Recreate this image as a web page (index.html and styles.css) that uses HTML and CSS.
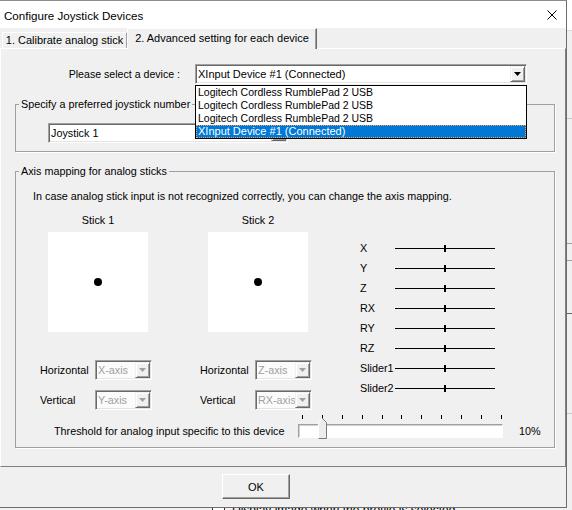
FILE: index.html
```html
<!DOCTYPE html>
<html lang="en">
<head>
    <meta charset="UTF-8">
    <meta name="viewport" content="width=device-width, initial-scale=1.0">
    <title>Configure Joystick Devices</title>
    <link rel="stylesheet" href="styles.css">
</head>
<body>
    <!-- Ventana de fondo (parcialmente visible) -->
    <div class="backwin">
        <div class="bw-title"></div>
        <div class="bw-row r1"></div>
        <div class="bw-row r2"></div>
        <div class="bw-row r3"></div>
        <div class="bw-row r4"></div>
        <div class="bw-row r5"></div>
        <div class="bw-row r6"></div>
        <div class="bw-foot"><span class="bw-check"></span>Display image when the profile is selected</div>
    </div>

    <div class="dialog">
        <div class="titlebar">
            <span class="title">Configure Joystick Devices</span>
            <svg class="close" width="10" height="10" viewBox="0 0 10 10">
                <path d="M0.5 0.5L9.5 9.5M9.5 0.5L0.5 9.5" stroke="#000" stroke-width="1" fill="none"/>
            </svg>
        </div>

        <div class="tabs">
            <div class="tab tab-1">1. Calibrate analog stick</div>
            <div class="tab tab-2">2. Advanced setting for each device</div>
        </div>

        <div class="panel">
            <div class="device-row">
                <label class="device-label">Please select a device :</label>
                <div class="combo device-combo">
                    <span class="combo-text">XInput Device #1 (Connected)</span>
                    <span class="combo-btn"><i class="arrow"></i></span>
                    <ul class="droplist">
                        <li>Logitech Cordless RumblePad 2 USB</li>
                        <li>Logitech Cordless RumblePad 2 USB</li>
                        <li>Logitech Cordless RumblePad 2 USB</li>
                        <li class="selected">XInput Device #1 (Connected)</li>
                    </ul>
                </div>
            </div>

            <fieldset class="group joy-group">
                <legend>Specify a preferred joystick number</legend>
                <div class="combo joy-combo">
                    <span class="combo-text">Joystick 1</span>
                    <span class="combo-btn"><i class="arrow"></i></span>
                </div>
            </fieldset>

            <fieldset class="group axis-group">
                <legend>Axis mapping for analog sticks</legend>
                <p class="hint">In case analog stick input is not recognized correctly, you can change the axis mapping.</p>

                <div class="axis-body">
                    <div class="stick">
                        <div class="stick-title">Stick 1</div>
                        <div class="pad"><span class="dot"></span></div>
                        <div class="map-row first">
                            <span class="map-label">Horizontal</span>
                            <div class="combo small is-disabled">
                                <span class="combo-text">X-axis</span>
                                <span class="combo-btn"><i class="arrow"></i></span>
                            </div>
                        </div>
                        <div class="map-row">
                            <span class="map-label">Vertical</span>
                            <div class="combo small is-disabled">
                                <span class="combo-text">Y-axis</span>
                                <span class="combo-btn"><i class="arrow"></i></span>
                            </div>
                        </div>
                    </div>

                    <div class="stick">
                        <div class="stick-title">Stick 2</div>
                        <div class="pad"><span class="dot"></span></div>
                        <div class="map-row first">
                            <span class="map-label">Horizontal</span>
                            <div class="combo small is-disabled">
                                <span class="combo-text">Z-axis</span>
                                <span class="combo-btn"><i class="arrow"></i></span>
                            </div>
                        </div>
                        <div class="map-row">
                            <span class="map-label">Vertical</span>
                            <div class="combo small is-disabled">
                                <span class="combo-text">RX-axis</span>
                                <span class="combo-btn"><i class="arrow"></i></span>
                            </div>
                        </div>
                    </div>

                    <div class="axes">
                        <div class="axis"><span class="axis-name">X</span><span class="axis-track"></span></div>
                        <div class="axis"><span class="axis-name">Y</span><span class="axis-track"></span></div>
                        <div class="axis"><span class="axis-name">Z</span><span class="axis-track"></span></div>
                        <div class="axis"><span class="axis-name">RX</span><span class="axis-track"></span></div>
                        <div class="axis"><span class="axis-name">RY</span><span class="axis-track"></span></div>
                        <div class="axis"><span class="axis-name">RZ</span><span class="axis-track"></span></div>
                        <div class="axis"><span class="axis-name">Slider1</span><span class="axis-track"></span></div>
                        <div class="axis"><span class="axis-name">Slider2</span><span class="axis-track"></span></div>
                    </div>
                </div>

                <div class="threshold">
                    <div class="ticks">
                        <i></i><i></i><i></i><i></i><i></i><i></i><i></i><i></i><i></i><i></i><i></i>
                    </div>
                    <span class="th-label">Threshold for analog input specific to this device</span>
                    <div class="channel">
                        <svg class="thumb" width="9" height="21" viewBox="0 0 9 21">
                            <path d="M0.5 20.5V4.5L4.5 0.5L8.5 4.5V20.5Z" fill="#ececec"/>
                            <path d="M0.5 20V4.5L4.5 0.5" fill="none" stroke="#fff"/>
                            <path d="M4.5 0.5L8.5 4.5V20.5H0.5" fill="none" stroke="#7a7a7a"/>
                        </svg>
                    </div>
                    <span class="th-value">10%</span>
                </div>
            </fieldset>
        </div>

        <div class="footer">
            <button class="ok" type="button">OK</button>
        </div>
    </div>
</body>
</html>
```

FILE: styles.css
```css
* {
    box-sizing: border-box;
}

body {
    margin: 0;
    width: 572px;
    height: 510px;
    position: relative;
    overflow: hidden;
    background: #f0f0f0;
    font-family: "Liberation Sans", Arial, sans-serif;
    font-size: 10.8px;
    line-height: 13px;
    color: #000;
}

/* Ventana de fondo */
.backwin {
    position: absolute;
    left: 160px;
    top: 0;
    width: 420px;
    height: 530px;
    background: #f0f0f0;
}

.bw-title {
    height: 31px;
    background: #fff;
    border-bottom: 1px solid #dadada;
}

.bw-row {
    border-bottom: 1px solid #c8c8c8;
}

.bw-row.r1 { height: 88px; }
.bw-row.r2 { height: 125px; border-color: #a0a0a0; }
.bw-row.r3 { height: 17px; border-color: #a0a0a0; }
.bw-row.r4 { height: 53px; border-color: #646464; }
.bw-row.r5 { height: 100px; }
.bw-row.r6 { height: 88px; border: none; }

.bw-foot {
    display: flex;
    align-items: flex-start;
    padding: 1px 0 0 52px;
    font-size: 12px;
    line-height: 14px;
}

.bw-check {
    width: 13px;
    height: 13px;
    margin: 3px 7px 0 0;
    border: 1px solid #333;
    background: #fff;
}

/* Dialogo */
.dialog {
    position: absolute;
    left: 0;
    top: 0;
    width: 567px;
    height: 508px;
    display: flex;
    flex-direction: column;
    background: #f0f0f0;
    border-top: 1px solid #8c8c8c;
    border-right: 1px solid #6d6d6d;
    border-bottom: 1px solid #6d6d6d;
}

.titlebar {
    height: 27px;
    flex: none;
    display: flex;
    align-items: center;
    padding: 1px 0 0 4px;
    background: #fff;
    font-size: 11.6px;
}

.close {
    margin-left: auto;
    margin-right: 9px;
}

/* Pestañas */
.tabs {
    height: 20px;
    flex: none;
    display: flex;
    align-items: flex-end;
    padding-left: 2px;
    font-size: 11px;
}

.tab {
    display: flex;
    align-items: center;
    justify-content: center;
    white-space: nowrap;
}

.tab-1 {
    width: 125px;
    height: 16px;
    border-top: 1px solid #fff;
    border-left: 1px solid #fff;
    border-right: 1px solid #a0a0a0;
}

.tab-2 {
    width: 190px;
    height: 21px;
    margin-bottom: -1px;
    padding-bottom: 2px;
    position: relative;
    z-index: 1;
    background: #f0f0f0;
    border-top: 1px solid #fff;
    border-left: 1px solid #fff;
    border-right: 1px solid #696969;
    box-shadow: inset -1px 0 #a0a0a0;
}

.panel {
    height: 419px;
    flex: none;
    border: 1px solid;
    border-color: #fff #808080 #808080 #fff;
}

/* Selector de dispositivo */
.device-row {
    display: flex;
    align-items: center;
    height: 20px;
    margin-top: 15px;
}

.device-label {
    width: 179px;
    text-align: right;
    font-size: 10.6px;
}

.combo {
    display: flex;
    align-items: center;
    height: 20px;
    padding: 1px;
    position: relative;
    background: #fff;
    border: 1px solid;
    border-color: #a0a0a0 #fff #fff #a0a0a0;
    box-shadow: inset 1px 1px 0 #696969, inset -1px -1px 0 #e3e3e3;
}

.combo-text {
    flex: 1;
    min-width: 0;
    overflow: hidden;
    white-space: nowrap;
    padding-left: 1px;
}

.combo-btn {
    width: 15px;
    height: 16px;
    flex: none;
    display: flex;
    align-items: center;
    justify-content: center;
    background: #f0f0f0;
    border: 1px solid;
    border-color: #f0f0f0 #696969 #696969 #f0f0f0;
    box-shadow: inset 1px 1px 0 #fff, inset -1px -1px 0 #a0a0a0;
}

.arrow {
    width: 7px;
    height: 4px;
    background: #000;
    clip-path: polygon(0 0, 100% 0, 50% 100%);
}

.device-combo {
    width: 332px;
    margin-left: 15px;
    font-size: 11px;
}

.droplist {
    position: absolute;
    left: -1px;
    top: calc(100% + 2px);
    width: 332px;
    margin: 0;
    padding: 0;
    list-style: none;
    background: #fff;
    border: 1px solid #000;
    z-index: 5;
    font-size: 10.5px;
}

.droplist li {
    height: 13px;
    padding-left: 2px;
    white-space: nowrap;
}

.droplist li.selected {
    background: #0078d7;
    color: #fff;
    font-size: 11px;
    outline: 1px dotted #f5a14a;
    outline-offset: -1px;
}

/* Grupos */
.group {
    width: 540px;
    min-width: 0;
    margin: 14px 0 0 14px;
    padding: 0;
    border: 1px solid #a0a0a0;
    box-shadow: 1px 1px 0 #fff;
}

.group legend {
    margin-left: 3px;
    padding: 0 2px;
}

.joy-group {
    padding: 12px 0 8px 0;
}

.joy-combo {
    width: 240px;
    margin-left: 32px;
}

.axis-group {
    margin-top: 13px;
    padding: 0 0 8px 0;
}

.hint {
    margin: 12px 0 0 17px;
}

.axis-body {
    display: flex;
    margin-top: 11px;
    padding-left: 24px;
}

.stick {
    width: 160px;
    display: flex;
    flex-direction: column;
}

.stick-title {
    width: 100px;
    margin-left: 8px;
    text-align: center;
}

.pad {
    width: 100px;
    height: 100px;
    margin: 5px 0 0 8px;
    display: flex;
    align-items: center;
    justify-content: center;
    background: #fff;
}

.dot {
    width: 8px;
    height: 8px;
    border-radius: 50%;
    background: #000;
}

.map-row {
    display: flex;
    align-items: center;
    margin-top: 10px;
}

.map-row.first {
    margin-top: 28px;
}

.map-label {
    width: 55px;
}

.combo.small {
    width: 57px;
}

.combo.is-disabled {
    background: #fbfbfb;
    color: #a0a0a0;
}

.combo.is-disabled .arrow {
    background: #a0a0a0;
}

/* Ejes */
.axes {
    margin-top: 24px;
}

.axis {
    display: flex;
    align-items: center;
    height: 20px;
}

.axis-name {
    width: 35px;
    white-space: nowrap;
}

.axis-track {
    width: 100px;
    height: 1px;
    background: #000;
    position: relative;
}

.axis-track::after {
    content: "";
    position: absolute;
    left: 49px;
    top: -3px;
    width: 2px;
    height: 7px;
    background: #000;
}

/* Umbral */
.threshold {
    display: grid;
    grid-template-columns: 282px 205px auto;
    grid-template-rows: 9px 15px;
    margin: 5px 0 0 0;
}

.ticks {
    grid-column: 2;
    grid-row: 1;
    display: flex;
    justify-content: space-between;
    align-items: flex-start;
    padding: 0 1px 0 4px;
}

.ticks i {
    width: 1px;
    height: 4px;
    background: #000;
}

.th-label {
    grid-column: 1;
    grid-row: 2;
    align-self: center;
    padding-left: 38px;
    white-space: nowrap;
}

.channel {
    grid-column: 2;
    grid-row: 2;
    height: 14px;
    position: relative;
    background: #fff;
    border: 1px solid;
    border-color: #a0a0a0 #fff #fff #a0a0a0;
    box-shadow: inset 1px 1px 0 #d0d0d0;
}

.thumb {
    position: absolute;
    left: 19px;
    top: -7px;
}

.th-value {
    grid-column: 3;
    grid-row: 2;
    align-self: center;
    padding-left: 16px;
}

/* Pie */
.footer {
    flex: 1;
}

.ok {
    display: block;
    width: 68px;
    height: 25px;
    margin: 7px 0 0 222px;
    padding: 0;
    font-family: inherit;
    font-size: 11px;
    color: #000;
    background: #f0f0f0;
    border: 1px solid;
    border-color: #fff #696969 #696969 #fff;
    box-shadow: inset -1px -1px 0 #a0a0a0;
}
```
